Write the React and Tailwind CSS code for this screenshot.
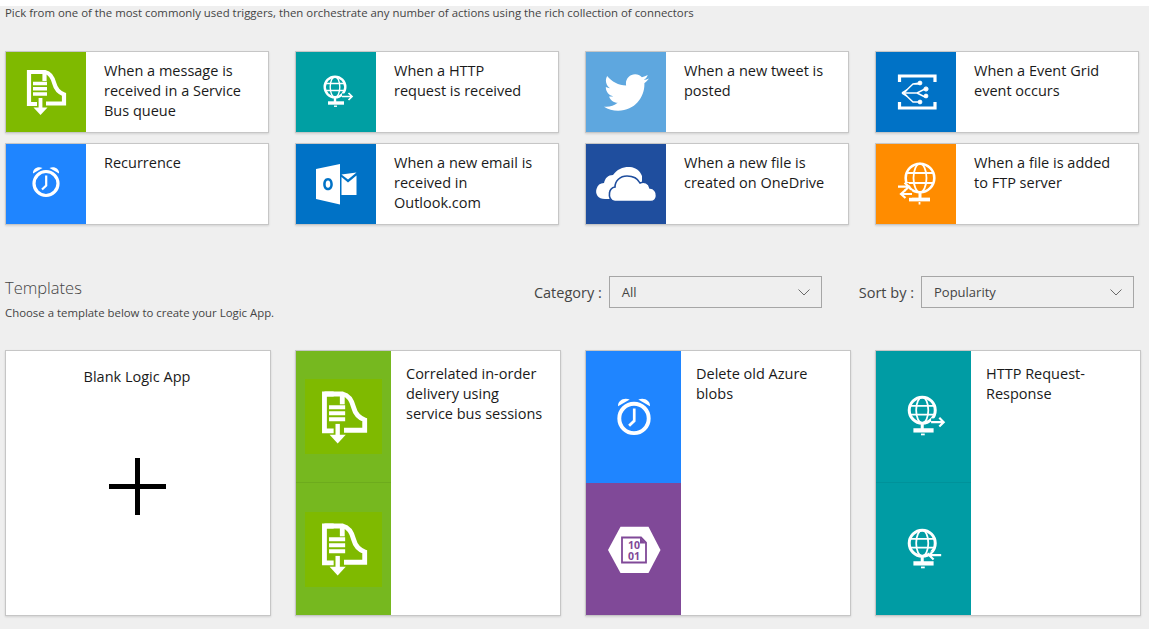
import { FaTwitter } from "react-icons/fa";

const font = { fontFamily: '"Open Sans", "Noto Sans", sans-serif' };

// =========================
// Icons (drawn in an 80x80 tile)
// =========================

const ServiceBusIcon = ({ size = 80 }) => (
  <svg width={size} height={size} viewBox="0 0 80 80" className="shrink-0" fill="none" stroke="white" strokeWidth="4.2">
    <path d="M31 20H23V52H31" />
    <path d="M23 20H39C44 21 47 26 48.5 32C50 38 53 40.5 58 42.5V51.5H40" />
    <path d="M38.5 20V29" />
    <path d="M27 31.5H41M27 36.8H41M27 42H41" strokeWidth="3.4" />
    <path d="M34.5 46V57" strokeWidth="3.8" />
    <path d="M27.5 55.5H41.5L34.5 63Z" fill="white" stroke="none" />
  </svg>
);

const GlobeIcon = ({ size = 80, arrow = "out", halo = "#009fa3" }) => (
  <svg width={size} height={size} viewBox="0 0 80 80" className="shrink-0" fill="none" stroke="white" strokeWidth="1.4">
    <circle cx="39" cy="35" r="10.3" strokeWidth="2.4" />
    <ellipse cx="39" cy="35" rx="4.8" ry="10.3" />
    <path d="M29.5 31.5H48.5M29.5 38.5H48.5" />
    <path d="M39 46V51" strokeWidth="2.4" />
    <path d="M32 51H48" strokeWidth="3.4" />
    <path d="M38 54.2H41" strokeWidth="1.4" />
    {arrow === "out" ? (
      <>
        <path d="M46 44.5H56" stroke={halo} strokeWidth="6" />
        <path d="M46 44.5H56M52.5 41L56 44.5L52.5 48" strokeWidth="1.7" />
      </>
    ) : (
      <>
        <path d="M44.5 44.5H54" stroke={halo} strokeWidth="6" />
        <path d="M44.5 44.5H54M48 41L44.5 44.5L48 48" strokeWidth="1.7" />
      </>
    )}
  </svg>
);

const ClockIcon = ({ size = 80 }) => (
  <svg width={size} height={size} viewBox="0 0 80 80" className="shrink-0" fill="none" stroke="white">
    <circle cx="40" cy="39.5" r="12" strokeWidth="3.2" />
    <path d="M40.2 31.5V41.5L36 45.5" strokeWidth="2.2" />
    <path d="M27 29.5C26.5 25 31.5 22 36.5 24Z" fill="white" stroke="none" />
    <path d="M53 29.5C53.5 25 48.5 22 43.5 24Z" fill="white" stroke="none" />
  </svg>
);

const OutlookIcon = () => (
  <svg width="80" height="80" viewBox="0 0 80 80">
    <path d="M45.5 33L52 38.5L60.5 31.5V51H45.5Z" fill="white" />
    <path d="M45.5 30.5L60.5 28.5L52 35.5L45.5 30.5Z" fill="white" />
    <path fillRule="evenodd" fill="white" d="M20 25L44 20V60.5L20 55ZM32 34C28.8 34 27.2 37 27.2 40.2C27.2 43.4 28.8 46.3 32 46.3C35.2 46.3 36.8 43.4 36.8 40.2C36.8 37 35.2 34 32 34ZM32 36.6C33.6 36.6 34.3 38.2 34.3 40.2C34.3 42.2 33.6 43.8 32 43.8C30.4 43.8 29.7 42.2 29.7 40.2C29.7 38.2 30.4 36.6 32 36.6Z" />
  </svg>
);

const OneDriveIcon = () => (
  <svg width="80" height="80" viewBox="0 0 80 80">
    <path d="M19 55C12 55 9 50 10.5 45C11.5 41 14 39 18 39C19 34 22 31 27 31C31 25 38 22.5 44 23C50 23.5 54 27 56 32V40L30 55Z" fill="white" />
    <path
      d="M29 57.5C24 57.5 23 52 23.5 49C24 45 26 43.5 29 43C29 37 34 32 41 32C47 32 52 35 54 39C58 37 63 39 64 44C68 44 71 48 70.5 52C70 56 67 57.5 65 57.5Z"
      fill="white"
      stroke="#1f4e9e"
      strokeWidth="1.6"
    />
  </svg>
);

const EventGridIcon = () => (
  <svg width="80" height="80" viewBox="0 0 80 80" fill="none" stroke="white">
    <path d="M23.5 30V24H59V30M23.5 50V56H59V50" strokeWidth="3.2" />
    <path d="M27.5 41L37 32H44M27.5 41L37 50H44M27.5 41H41L49 37M41 41L49 45M37 32L44 31" strokeWidth="1.4" />
    <circle cx="44" cy="31" r="1.9" fill="white" />
    <circle cx="50" cy="37" r="2.1" fill="white" />
    <circle cx="50" cy="44" r="1.9" fill="white" />
    <circle cx="44" cy="50" r="1.9" fill="white" />
    <path d="M26 41L31 38M26 41L31 44" strokeWidth="1.6" />
  </svg>
);

const FtpIcon = () => (
  <svg width="80" height="80" viewBox="0 0 80 80" fill="none" stroke="white" strokeWidth="1.8">
    <circle cx="44" cy="34" r="14.3" strokeWidth="2.6" />
    <ellipse cx="44" cy="34" rx="6.5" ry="14.3" />
    <path d="M30 29H58M30 39H58" />
    <path d="M44 48V55" strokeWidth="3" />
    <path d="M33 55.5H54" strokeWidth="3.8" />
    <path d="M43.5 58V60.5" strokeWidth="1.8" />
    <path d="M22 42.7H33" stroke="#ff8c00" strokeWidth="7" />
    <path d="M36 50H25" stroke="#ff8c00" strokeWidth="7" />
    <path d="M22 42.7H33M28.5 38.7L33 42.7L28.5 46.7" strokeWidth="2.2" />
    <path d="M36 50H25M29.5 46L25 50L29.5 54" strokeWidth="2.2" />
  </svg>
);

const BlobIcon = () => (
  <svg width="80" height="80" viewBox="0 0 80 80">
    <path d="M14 41L26.5 17.7H54.5L66.5 41L54.5 64H26.5Z" fill="white" />
    <path d="M28 28.5H47L52 33.5V53.5H28Z" fill="none" stroke="#804998" strokeWidth="1.8" />
    <path d="M46 28.5V34.5H52Z" fill="#804998" />
    <text x="40" y="40" textAnchor="middle" fontSize="10.5" fontWeight="700" fill="#804998" style={font}>10</text>
    <text x="40" y="50.6" textAnchor="middle" fontSize="10.5" fontWeight="700" fill="#804998" style={font}>01</text>
  </svg>
);

const Chevron = () => (
  <svg width="12" height="7" viewBox="0 0 12 7" fill="none" stroke="#6a6a6a" strokeWidth="1">
    <path d="M0.5 0.5L6 6L11.5 0.5" />
  </svg>
);

// =========================
// Data
// =========================

const triggers = [
  { title: "When a message is received in a Service Bus queue", bg: "bg-[#7fba00]", icon: <ServiceBusIcon /> },
  { title: "When a HTTP request is received", bg: "bg-[#009fa3]", icon: <GlobeIcon /> },
  { title: "When a new tweet is posted", bg: "bg-[#5ea7df]", icon: <FaTwitter size={45} color="white" /> },
  { title: "When a Event Grid event occurs", bg: "bg-[#0072c6]", icon: <EventGridIcon /> },
  { title: "Recurrence", bg: "bg-[#1f85ff]", icon: <ClockIcon /> },
  { title: "When a new email is received in Outlook.com", bg: "bg-[#0072c6]", icon: <OutlookIcon /> },
  { title: "When a new file is created on OneDrive", bg: "bg-[#1f4e9e]", icon: <OneDriveIcon /> },
  { title: "When a file is added to FTP server", bg: "bg-[#ff8c00]", icon: <FtpIcon /> },
];

const GreenTile = () => (
  <div className="flex-1 flex items-center justify-center">
    <div className="w-[77px] h-[75px] bg-[#7fba00] flex items-center justify-center">
      <ServiceBusIcon size={92} />
    </div>
  </div>
);

const templates = [
  {
    title: "Correlated in-order delivery using service bus sessions",
    bg: "bg-[#76b81f]",
    divider: "border-[#6dab1c]",
    top: <GreenTile />,
    bottom: <GreenTile />,
  },
  {
    title: "Delete old Azure blobs",
    bg: "bg-[#1f85ff]",
    bottomBg: "bg-[#804998]",
    divider: "border-[#1f85ff]",
    top: (
      <div className="pt-1">
        <ClockIcon size={98} />
      </div>
    ),
    bottom: <BlobIcon />,
  },
  {
    title: "HTTP Request-Response",
    bg: "bg-[#009ca4]",
    divider: "border-[#00929a]",
    top: <GlobeIcon size={101} halo="#009ca4" />,
    bottom: <GlobeIcon size={101} arrow="in" halo="#009ca4" />,
  },
];

// =========================
// Small parts
// =========================

const TriggerCard = ({ title, bg, icon }) => (
  <div className="h-[82px] bg-white border border-[#c6c6c6] shadow-[0_1px_2px_rgba(0,0,0,0.12)] flex">
    <div className={`w-20 h-20 shrink-0 flex items-center justify-center ${bg}`}>{icon}</div>
    <p className="pl-[18px] pr-[20px] pt-[9px] text-[14.5px] leading-5 text-[#1a1a1a]">{title}</p>
  </div>
);

const TemplateCard = ({ title, bg, bottomBg, divider, top, bottom }) => (
  <div className="h-[266px] bg-white border border-[#c6c6c6] shadow-[0_1px_2px_rgba(0,0,0,0.12)] flex">
    <div className={`w-[95px] shrink-0 flex flex-col ${bg}`}>
      <div className={`h-[132px] flex items-center justify-center border-b ${divider}`}>{top}</div>
      <div className={`flex-1 flex items-center justify-center ${bottomBg || ""}`}>{bottom}</div>
    </div>
    <p className="pl-[15px] pr-3 pt-[13px] text-[14.5px] leading-5 text-[#1a1a1a]">{title}</p>
  </div>
);

const Dropdown = ({ label, value }) => (
  <div className="flex items-center gap-[7px]">
    <span className="pt-px text-[14.5px] text-[#444]">{label}</span>
    <div className="w-[213px] h-8 border border-[#a6a6a6] flex items-center justify-between pl-3 pr-[11px]">
      <span className="pt-px text-[13px] text-[#444]">{value}</span>
      <Chevron />
    </div>
  </div>
);

const App = () => {
  return (
    <div className="w-[1149px] h-[629px] overflow-hidden bg-[#efefef]" style={font}>
      <div className="h-[6px] bg-white" />
      <p className="pl-[5px] h-[45px] text-[11.4px] leading-[13px] text-[#444]">
        Pick from one of the most commonly used triggers, then orchestrate any number of actions using the rich collection of connectors
      </p>

      {/* Triggers */}
      <div className="pl-[5px] grid grid-cols-[repeat(4,264px)] gap-x-[26px] gap-y-[10px]">
        {triggers.map((t) => (
          <TriggerCard key={t.title} {...t} />
        ))}
      </div>

      {/* Templates header */}
      <div className="pl-[5px] pr-[15px] pt-[51px] h-[125px] flex justify-between">
        <div>
          <h2 className="text-[16.5px] leading-6 font-light text-[#444]">Templates</h2>
          <p className="pt-[5px] text-[11.4px] leading-4 text-[#444]">Choose a template below to create your Logic App.</p>
        </div>
        <div className="flex gap-[37px] items-start">
          <Dropdown label="Category :" value="All" />
          <Dropdown label="Sort by :" value="Popularity" />
        </div>
      </div>

      {/* Templates */}
      <div className="pl-[5px] grid grid-cols-[repeat(4,266px)] gap-x-6">
        <div className="h-[266px] pr-[2px] bg-white border border-[#c6c6c6] shadow-[0_1px_2px_rgba(0,0,0,0.12)] flex flex-col items-center">
          <p className="pt-4 text-[14.5px] leading-5 text-[#1a1a1a]">Blank Logic App</p>
          <svg width="57" height="57" viewBox="0 0 57 57" className="mt-[71px]" fill="none" stroke="black" strokeWidth="5">
            <path d="M28.5 0V57M0 28.5H57" />
          </svg>
        </div>
        {templates.map((t) => (
          <TemplateCard key={t.title} {...t} />
        ))}
      </div>
    </div>
  );
};

export default App;
